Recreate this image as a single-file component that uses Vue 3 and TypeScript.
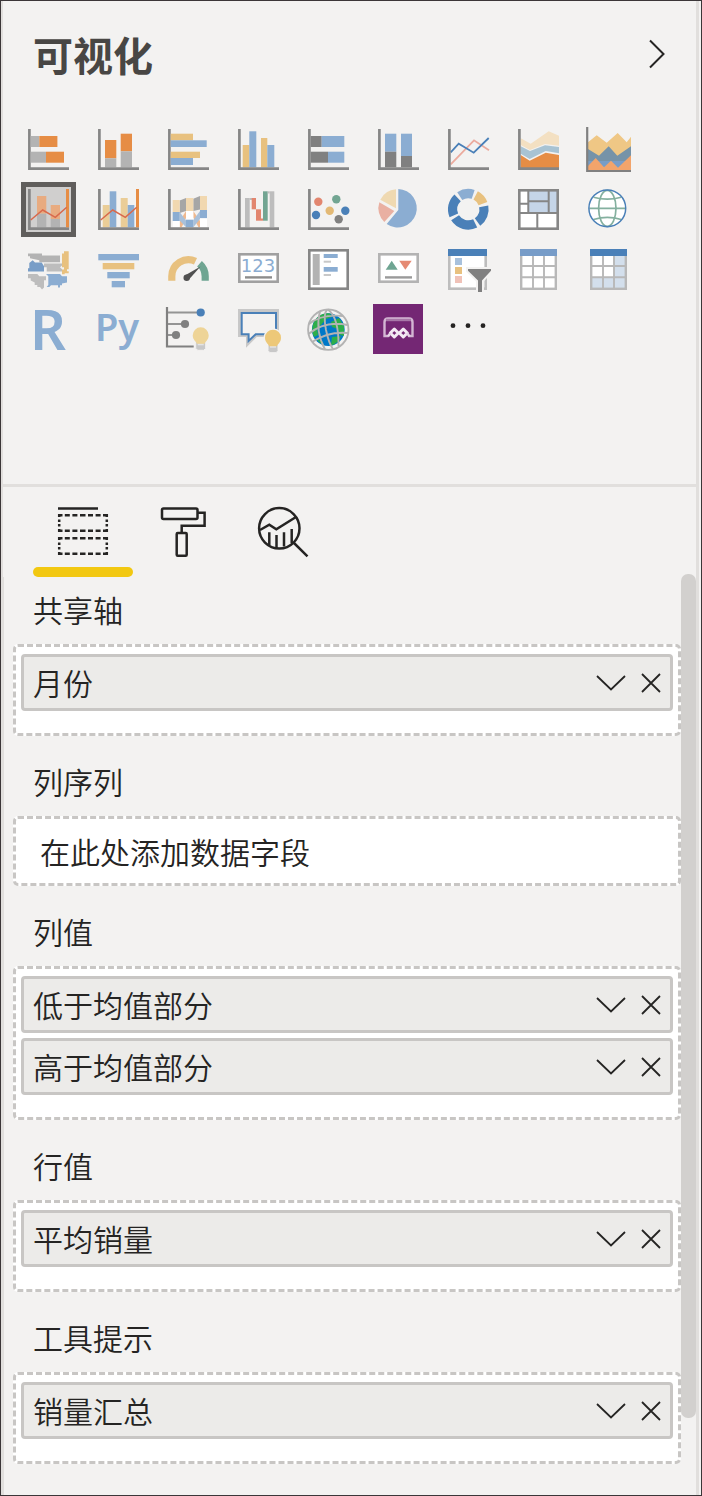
<script setup lang="ts">
import { ref } from 'vue'

interface Visual {
  name: string
  art: string
}

interface Well {
  label: string
  fields: string[]
}

const axis = '<path d="M8.4 7V46.6H48" fill="none" stroke="#868686" stroke-width="2.7"/>'
const trend =
  '<path d="M46.5 7V45.3" stroke="#e68d45" stroke-width="3"/><path d="M9.7 38L21.7 28L34.3 35.3L45.7 25.3" fill="none" stroke="#d9694c" stroke-width="1.5"/>'

function bar(x: number, y: number, x2: number, y2: number, fill: string): string {
  return `<rect x="${x}" y="${y}" width="${x2 - x}" height="${y2 - y}" fill="${fill}"/>`
}

function dot(x: number, y: number, r: number, fill: string): string {
  return `<circle cx="${x}" cy="${y}" r="${r}" fill="${fill}"/>`
}

function slice(from: number, to: number, color: string): string {
  return `<circle cx="27.3" cy="27.3" r="15.7" fill="none" stroke="${color}" stroke-width="9.3" pathLength="360" stroke-dasharray="${to - from} 360" transform="rotate(${from - 90} 27.3 27.3)"/>`
}

function bulb(x: number, y: number, color: string): string {
  return `<g transform="translate(${x} ${y})"><path d="M-5 6H5V13L3 15H-3L-5 13Z" fill="#c8c8c8" stroke="#f3f2f1" stroke-width="1"/><path d="M-3 9H3" stroke="#e4e4e4" stroke-width="2"/><path d="M-4 8.5C-4 6.5-8 5-8 0A8 8 0 1 1 8 0C8 5 4 6.5 4 8.5Z" fill="${color}"/></g>`
}

const orange = '#e68d45'
const gray = '#b3b3b3'
const dark = '#808080'
const yellow = '#e8c17f'
const blue = '#8badd2'
const deep = '#4a80b8'
const green = '#72a592'
const red = '#e2866f'

const visuals: Visual[] = [
  {
    name: '堆积条形图',
    art: axis + bar(9.7, 14, 18.3, 25, gray) + bar(18.3, 14, 36.4, 25, orange) + bar(9.7, 29.7, 25, 40.7, gray) + bar(25, 29.7, 43, 40.7, orange),
  },
  {
    name: '堆积柱形图',
    art: bar(14, 18, 25.3, 36.3, orange) + bar(14, 36.3, 25.3, 45.3, gray) + bar(29.7, 11.7, 41, 29.3, orange) + bar(29.7, 29.3, 41, 45.3, gray) + axis,
  },
  {
    name: '簇状条形图',
    art: axis + bar(9.7, 11.7, 32, 18.3, yellow) + bar(9.7, 18.3, 45.7, 25, blue) + bar(9.7, 29.7, 39, 36, yellow) + bar(9.7, 36, 32, 43, blue),
  },
  {
    name: '簇状柱形图',
    art: bar(11.7, 23, 18.3, 45.3, yellow) + bar(18.3, 9.3, 25.3, 45.3, blue) + bar(30, 16, 36.3, 45.3, yellow) + bar(36.3, 23, 43.3, 45.3, blue) + axis,
  },
  {
    name: '百分比堆积条形图',
    art: axis + bar(9.7, 14, 20.7, 25, dark) + bar(20.7, 14, 43.3, 25, blue) + bar(9.7, 29.7, 27, 40.7, dark) + bar(27, 29.7, 43.3, 40.7, blue),
  },
  {
    name: '百分比堆积柱形图',
    art: bar(14, 11.7, 25.3, 29.7, blue) + bar(14, 29.7, 25.3, 45.3, dark) + bar(30, 11.7, 41, 34, blue) + bar(30, 34, 41, 45.3, dark) + axis,
  },
  {
    name: '折线图',
    art:
      '<path d="M9.7 42.3L33 18.3L48 28.3" fill="none" stroke="#ecab9e" stroke-width="1.8"/><path d="M9.7 30.3L17.7 21.7L32.7 30.7L47.7 16" fill="none" stroke="#4a80b8" stroke-width="1.8"/>' + axis,
  },
  {
    name: '分区图',
    art:
      '<path d="M9.7 16.3L19.7 21.7L37.7 9.3L48 13.7V23.7L34 22L19 28L9.7 23Z" fill="#f3e0c2"/><path d="M9.7 24.3L19 29L34 23.3L48 25V31.3L34.7 29L18.7 37L9.7 31.7Z" fill="#a8c3d3"/><path d="M9.7 33L18.7 38.7L34.7 30.7L48 33V46H9.7Z" fill="#e68d45"/>' + axis,
  },
  {
    name: '堆积面积图',
    art:
      '<path d="M7 20.3L15.7 13.3L25.7 20.7L36.7 11L45.7 20.3L50 14.7V48H7Z" fill="#efc785"/><path d="M7 27L18 33.7L27.7 24.3L36.3 33.7L50 24.3V48H7Z" fill="#7693a8"/><path d="M7 39H50V48H7Z" fill="#789dc7"/><path d="M7 44L14.7 36L23 45.3L30 38.7L37 45.7L50 33.3V48H7Z" fill="#f2a46b"/><path d="M6.2 5V49H50" fill="none" stroke="#808080" stroke-width="2.2"/>',
  },
  {
    name: '折线和堆积柱形图',
    art: bar(16, 14, 25.3, 31.7, '#e8ab80') + bar(16, 31.7, 25.3, 45.3, gray) + bar(29.7, 23, 39, 37, '#e8ab80') + bar(29.7, 37, 39, 45.3, gray) + axis + trend,
  },
  {
    name: '折线和簇状柱形图',
    art: bar(11.7, 23, 18.7, 45.3, '#eacd97') + bar(18.7, 9.3, 25.3, 45.3, blue) + bar(29.7, 16, 36.7, 45.3, '#eacd97') + bar(36.7, 23, 43.3, 45.3, blue) + axis + trend,
  },
  {
    name: '功能区图表',
    art:
      '<path d="M18.7 18.5L25 16V29L18.7 31ZM32.3 16.7L39 14V27.5L32.3 29Z" fill="#a6a6a6"/><path d="M18.7 39L25 29V36L20.7 45.3H18.7ZM32.3 29L39 39V45.3H37.5L32.3 35.5Z" fill="#f0b98e"/><path d="M18.7 30L25 38.5V45.3L18.7 38.5ZM32.3 38L39 29V37L32.3 45.3Z" fill="#a9c0d9"/>' +
      bar(11.7, 18, 18.7, 30, '#f1d8b0') + bar(11.7, 30, 18.7, 39, blue) + bar(11.7, 39, 18.7, 45.3, '#fff') +
      bar(25, 16, 32.3, 29, '#f1d8b0') + bar(25, 29, 32.3, 37.7, '#fff') + bar(25, 37.7, 32.3, 45.3, blue) +
      bar(39, 14, 46, 28, '#f1d8b0') + bar(39, 28, 46, 36.3, blue) + bar(39, 36.3, 46, 45.3, '#fff') + axis,
  },
  {
    name: '瀑布图',
    art:
      bar(14, 16, 18.7, 45.3, '#bdbdbd') + bar(18.7, 16, 21, 18, '#bdbdbd') + bar(20.7, 16, 25, 27.3, red) + bar(25, 27.3, 30, 38.7, red) + bar(30, 36.5, 32, 38.7, red) +
      bar(32, 9.3, 36.7, 38.7, green) + bar(36.7, 9.3, 38.7, 11.5, '#bdbdbd') + bar(38.7, 9.3, 43.3, 45.3, '#bdbdbd') + axis,
  },
  {
    name: '散点图',
    art: axis + dot(17.3, 19.7, 4.2, red) + dot(35.3, 17.3, 4.2, green) + dot(28.7, 28.7, 4.2, '#e3b975') + dot(15, 33, 4.2, deep) + dot(44.3, 28.7, 4.2, deep) + dot(37.7, 37.3, 4.2, dark),
  },
  {
    name: '饼图',
    art:
      '<path d="M27.3 7A19.2 19.2 0 1 1 15.7 42L27.3 28Z" fill="#8badd2"/><path d="M25 7.3V26.3L9.3 17.7A19 19 0 0 1 25 7.3Z" fill="#efd9b1"/><path d="M8.3 20.3L23.3 29L13.3 40A19 19 0 0 1 8.3 20.3Z" fill="#e9b0a2"/>',
  },
  {
    name: '圆环图',
    art: slice(-33, 18, blue) + slice(28, 69, yellow) + slice(79, 144, deep) + slice(154, 237, deep) + slice(247, 317, deep),
  },
  {
    name: '树状图',
    art:
      bar(8, 8, 47, 47, '#fff') + bar(18, 8, 47, 31, '#c5d5e8') +
      '<rect x="8.3" y="8.3" width="38.4" height="38.4" fill="none" stroke="#868686" stroke-width="2.6"/><path d="M17.3 8V31M8 21.7H17.3M17.3 19.3H37.7M37.7 8V31M8 31H47M26.3 31V47" stroke="#868686" stroke-width="2" fill="none"/>',
  },
  {
    name: '地图',
    art:
      '<circle cx="26.3" cy="26.3" r="18" fill="#fff"/><g fill="none" stroke="#84b09f" stroke-width="1.7"><ellipse cx="26.3" cy="26.3" rx="8.7" ry="18"/><path d="M8.3 26.3H44.3M12.5 15.2Q26.3 19 40.2 15.2M12.5 37.5Q26.3 33.2 40.2 37.5"/></g><circle cx="26.3" cy="26.3" r="18.4" fill="none" stroke="#4a80b8" stroke-width="1.5"/>',
  },
  {
    name: '着色地图',
    art:
      '<g transform="translate(0 -4.7)"><path d="M7 16.3H21V18.3H39V25H18.3V23L9 21V19H7Z" fill="#b3b3b3"/><path d="M8.3 25.7L11.7 23L14 25.3H20.7L23 29V34.3H7V31H8.3Z" fill="#789dc7"/><path d="M23 26.2H41V28.3L39 30L41 32V34.3H25.7V30H23Z" fill="#bdbdbd"/><path d="M7 36.7H16.3L18.3 39H25V43H23V50.3L21 52.3L19 49.7H16.3V47.7H13.7V45.3L9.7 43.3V41H7Z" fill="#bdbdbd"/><path d="M25 36.7H39L41 39H46V45.3L41 46.3V48H39V50.3H37V48H30L28.3 49.7H25.7L27.3 47.7V39Z" fill="#8badd2"/><path d="M43 14H47.7V32H46V34H47.7V36H43.7V37H41V32.3H43V30H41V16.3H43Z" fill="#e8c17f"/></g>',
  },
  {
    name: '漏斗图',
    art: bar(7.3, 12, 48, 18.3, blue) + bar(11.7, 21, 43.3, 27.3, yellow) + bar(16.3, 30, 38.7, 36.3, blue) + bar(20.7, 39, 34, 45.3, blue),
  },
  {
    name: '仪表',
    art:
      '<g fill="none" stroke-width="7.2"><path d="M10.8 38.7V34.3A16.7 16.7 0 0 1 34.5 19.2" stroke="#e8c17f"/><path d="M38.5 21.8A16.7 16.7 0 0 1 44.2 34.3V38.7" stroke="#6fa592"/></g><path d="M23.8 33.5L39.5 24.5L27.5 38Z" fill="#505050"/><circle cx="25.7" cy="35.7" r="3.2" fill="#505050"/>',
  },
  {
    name: '卡片图',
    art:
      '<rect x="8.3" y="12.3" width="38.4" height="27.4" fill="#fff" stroke="#a0a0a0" stroke-width="2.6"/><text x="9.8" y="30" font-family="DejaVu Sans, sans-serif" font-size="18" fill="#8badd2">123</text><path d="M14 35.4H41" stroke="#8c8c8c" stroke-width="2.4"/>',
  },
  {
    name: '多行卡',
    art:
      '<rect x="8.3" y="8.3" width="38.4" height="38.4" fill="#fff" stroke="#868686" stroke-width="2.6"/>' +
      bar(11.7, 12, 18.7, 43, gray) + bar(22.7, 12, 36.7, 16, blue) + bar(22.7, 18.7, 30, 20.7, '#c8c8c8') + bar(22.7, 25, 36.7, 29.7, blue) + bar(22.7, 32, 30, 34, '#c8c8c8'),
  },
  {
    name: 'KPI',
    art:
      '<rect x="8.3" y="12.3" width="38.4" height="27.4" fill="#fff" stroke="#b3b3b3" stroke-width="2.6"/><path d="M14.7 27.7L20.7 18.7L26.7 27.7Z" fill="#6fa592"/><path d="M28.3 18.7H40.7L34.3 27.7Z" fill="#e58a73"/><path d="M14 35.4H41" stroke="#9a9a9a" stroke-width="2.4"/>',
  },
  {
    name: '切片器',
    art:
      '<rect x="8.3" y="9" width="36.4" height="37.7" fill="#fff" stroke="#bdbdbd" stroke-width="2.6"/>' +
      bar(7, 7, 46, 14, deep) + bar(14, 16, 21, 23, '#a8c1dc') + bar(14, 25, 21, 32, yellow) + bar(14, 34, 21, 41, '#f0c2b8') +
      '<path d="M27 27H50V28.7L41 38.5V50H37V38.5L27 28.7Z" fill="#808080" stroke="#f3f2f1" stroke-width="4" paint-order="stroke"/>',
  },
  {
    name: '表',
    art:
      '<rect x="10.2" y="9" width="34.6" height="37.8" fill="#fff" stroke="#b8b8b8" stroke-width="2.4"/><path d="M22 14V46M33 14V46M10 24H45M10 35.3H45" stroke="#b8b8b8" stroke-width="1.9"/>' + bar(9, 7, 46, 14, '#779cc8'),
  },
  {
    name: '矩阵',
    art:
      bar(10, 9, 45, 47, '#fff') + bar(33, 13, 45, 47, '#d3dfec') + bar(10, 35, 45, 47, '#d3dfec') +
      '<rect x="10.2" y="9" width="34.6" height="37.8" fill="none" stroke="#b8b8b8" stroke-width="2.4"/><path d="M22 14V46M33 14V46M10 24H45M10 35.3H45" stroke="#b8b8b8" stroke-width="1.9"/>' + bar(9, 7, 46, 14, deep),
  },
  {
    name: 'R 脚本视觉对象',
    art: '<text x="9" y="48" font-family="Noto Sans, sans-serif" font-weight="600" font-size="56" fill="#8badd2">R</text>',
  },
  {
    name: 'Python 视觉对象',
    art: '<text x="4" y="39" font-family="Noto Sans, sans-serif" font-weight="600" font-size="38" fill="#8badd2">Py</text>',
  },
  {
    name: '关键影响者',
    art:
      '<path d="M6 5V44.5H32.7" fill="none" stroke="#808080" stroke-width="2.2"/><path d="M7 10.4H38M7 22H22M7 33H13" stroke="#949494" stroke-width="2"/>' +
      dot(39.7, 10.5, 4.1, deep) + dot(24, 22, 4.1, dark) + dot(15, 33, 4.1, dark) + bulb(39.7, 33.3, '#eed497'),
  },
  {
    name: '问答',
    art:
      '<path d="M7 7H48V35H25.7L15 45.7V35H7Z" fill="#c8c8c8"/><path d="M10.7 11H45V32.2H24.7L17.6 39V32.2H10.7Z" fill="#f3f2f1" stroke="#4a80b8" stroke-width="2"/><circle cx="42" cy="35.7" r="9.5" fill="#f3f2f1"/>' + bulb(42, 35.7, '#edc878'),
  },
  {
    name: 'ArcGIS 地图',
    art:
      '<circle cx="27.3" cy="27.7" r="16.4" fill="#0078c8"/><g fill="#2eae4a"><path d="M14 18Q20 10 29 11.5L31 15L25 17L20 23L16 26L17 33L13 35Q9 26 14 18Z"/><path d="M30 20L38 16L43 24V34L39 33L37 27L31 25Z"/><path d="M31 35L40 34Q37 42 30 43.5ZM15 36L22 40L21 42Q17 40 15 36Z"/></g><g fill="none" stroke="#b3b3b3" stroke-width="1.9"><circle cx="27.3" cy="27.7" r="20.2"/><path d="M19 9Q14 29 24 47.5M26 7.5Q22 12 25 28Q28 42 32 47M27 7.5Q38 16 37.5 44M8 22Q20 12 42 14M7.5 32Q24 18 46.5 23M11 40Q28 29 47 31"/></g>',
  },
  {
    name: 'Power Apps',
    art:
      '<rect x="2" y="2" width="50" height="50" fill="#742774"/><path d="M17.5 34H13.5V20Q13.5 16.5 17 16.5H38Q41.5 16.5 41.5 20V34H37.5" fill="none" stroke="#d3b6d3" stroke-width="2.4"/><path d="M15 18H40" stroke="#a878a8" stroke-width="2.4"/><g fill="none" stroke="#f4eaf4" stroke-width="3" stroke-linejoin="round"><path d="M23.3 27L27.3 31L23.3 35L19.3 31Z"/><path d="M32.3 27L36.3 31L32.3 35L28.3 31Z"/></g><path d="M17 34.5L19.5 31M38.5 34.5L36 31" stroke="#e6d3e6" stroke-width="2.4"/>',
  },
  {
    name: '更多选项',
    art: dot(12, 23.7, 2.4, '#252423') + dot(27, 23.7, 2.4, '#252423') + dot(42, 23.7, 2.4, '#252423'),
  },
]

const selected = ref('折线和堆积柱形图')

const tabs = [
  {
    name: '字段',
    art: '<path d="M0 1.5H40"/><path d="M0 8.2H50M0 23.8H50M0 31.2H50M0 46.8H50" stroke-dasharray="4.5 2.3 5 2.6 5 2.6 5.5 2.5 5 2.6 5 2.4 5 2"/><path d="M1.2 7V25M48.8 7V25M1.2 30V48M48.8 30V48" stroke-dasharray="3 2.5 2.5 2 2.5 2.5 3 2"/>',
  },
  {
    name: '格式',
    art: '<rect x="4" y="1.5" width="35.5" height="10.5" rx="1.5"/><path d="M40 5.8H46.6V18.8H23.7V25.4"/><rect x="18.7" y="26" width="10" height="22.7" rx="1"/>',
  },
  {
    name: '分析',
    art: '<circle cx="21.3" cy="21.3" r="20.2"/><path d="M2 23L11.3 17.7L18.3 22.3L38 10M11.3 25.3V38M18.5 28V41M26 25.3V39.5M33.7 22V36M35.5 35.5L49.5 49.3"/>',
  },
]
const activeTab = ref('字段')

const wells = ref<Well[]>([
  { label: '共享轴', fields: ['月份'] },
  { label: '列序列', fields: [] },
  { label: '列值', fields: ['低于均值部分', '高于均值部分'] },
  { label: '行值', fields: ['平均销量'] },
  { label: '工具提示', fields: ['销量汇总'] },
])

function removeField(well: Well, field: string): void {
  well.fields = well.fields.filter((f) => f !== field)
}
</script>

<template>
  <main class="frame">
    <div class="pane">
      <header class="head">
        <h1>可视化</h1>
        <button type="button" class="plain" aria-label="折叠窗格">
          <svg width="18" height="30" viewBox="0 0 18 30"><path d="M2 1.5L15.5 15L2 28.5" /></svg>
        </button>
      </header>

      <section class="gallery" aria-label="视觉对象">
        <button
          v-for="v in visuals"
          :key="v.name"
          type="button"
          class="visual"
          :class="{ selected: v.name === selected }"
          :aria-label="v.name"
          :aria-pressed="v.name === selected"
          @click="selected = v.name"
        >
          <svg width="55" height="55" viewBox="0 0 55 55" v-html="v.art"></svg>
        </button>
      </section>

      <nav class="tabs">
        <button
          v-for="t in tabs"
          :key="t.name"
          type="button"
          class="tab"
          :class="{ active: t.name === activeTab }"
          :aria-label="t.name"
          @click="activeTab = t.name"
        >
          <svg width="50" height="50" viewBox="0 0 50 50" v-html="t.art"></svg>
        </button>
      </nav>

      <div class="body">
        <div class="wells">
          <section v-for="w in wells" :key="w.label" class="well">
            <h2>{{ w.label }}</h2>
            <ul v-if="w.fields.length" class="drop">
              <li v-for="f in w.fields" :key="f" class="field">
                <span>{{ f }}</span>
                <button type="button" class="plain" :aria-label="f + ' 选项'">
                  <svg width="30" height="20" viewBox="0 0 30 20"><path d="M1 3L15 16.5L29 3" /></svg>
                </button>
                <button type="button" class="plain" :aria-label="'删除 ' + f" @click="removeField(w, f)">
                  <svg width="20" height="20" viewBox="0 0 20 20"><path d="M1 1L19 19M19 1L1 19" /></svg>
                </button>
              </li>
            </ul>
            <p v-else class="drop empty">在此处添加数据字段</p>
          </section>
        </div>
        <div class="track"><div class="thumb"></div></div>
      </div>
    </div>
  </main>
</template>

<style>
body {
  background: #f3f2f1;
}
</style>

<style scoped>
.frame {
  box-sizing: border-box;
  min-height: 100vh;
  display: flex;
  padding-right: 2px;
  border: 1px solid #3b3638;
  background: #f3f2f1;
  color: #252423;
  font-family: 'Noto Sans CJK SC', sans-serif;
}

.pane {
  flex: 1;
  min-width: 0;
  display: flex;
  flex-direction: column;
  border-left: 2px solid #e1dfdd;
  border-right: 3px solid #e1dfdd;
}

h1,
h2,
ul,
p {
  margin: 0;
  padding: 0;
}

button {
  margin: 0;
  padding: 0;
  border: 0;
  background: none;
  cursor: pointer;
}

svg {
  display: block;
  overflow: visible;
}

.plain svg {
  fill: none;
  stroke: #252423;
  stroke-width: 1.8;
}

.head {
  display: flex;
  align-items: center;
  justify-content: space-between;
  height: 106px;
  padding: 0 30px;
}

h1 {
  font-size: 40px;
  line-height: 60px;
  font-weight: 700;
  color: #484644;
}

.head .plain svg {
  stroke-width: 2;
}

.gallery {
  display: grid;
  grid-template-columns: repeat(auto-fill, 55px);
  gap: 5px 15px;
  padding: 15px 0 127px 18px;
}

.visual {
  width: 55px;
  height: 55px;
}

.selected {
  background: #d0cfce;
  box-shadow: inset 0 0 0 5px #605e5c;
}

.tabs {
  display: flex;
  padding: 20px 30px 0;
  border-top: 3px solid #e1dfdd;
}

.tab {
  display: flex;
  flex-direction: column;
  align-items: center;
  width: 100px;
}

.tab svg {
  fill: none;
  stroke: #252423;
  stroke-width: 2.5;
}

.tab::after {
  content: '';
  width: 100%;
  height: 10px;
  margin-top: 10px;
  border-radius: 5px;
}

.active::after {
  background: #f2c811;
}

.body {
  flex: 1;
  display: flex;
}

.wells {
  flex: 1;
  min-width: 0;
  padding-left: 9px;
  border-left: 1px solid #e1dfdd;
}

.well + .well {
  margin-top: 13px;
}

h2 {
  padding: 0 0 2px 20px;
  font-size: 30px;
  line-height: 65px;
  font-weight: 350;
}

.drop {
  list-style: none;
  display: grid;
  gap: 5px;
  padding: 7px 5px 22px;
  border: 3px dashed #c8c6c4;
  border-radius: 5px;
  background: #fff;
}

.empty {
  padding: 0 24px;
  font-size: 30px;
  line-height: 64px;
  font-weight: 350;
}

.field {
  display: flex;
  align-items: center;
  gap: 15px;
  padding: 0 9px;
  border: 3px solid #c8c6c4;
  border-radius: 4px;
  background: #ecebe9;
  font-size: 30px;
  line-height: 51px;
  font-weight: 350;
}

.field span {
  flex: 1;
}

.track {
  display: flex;
  flex-direction: column;
  width: 15px;
  margin-top: -3px;
}

.track::after {
  content: '';
  flex: 1;
}

.thumb {
  flex: 11;
  border-radius: 7px;
  background: #d2d0ce;
}
</style>
